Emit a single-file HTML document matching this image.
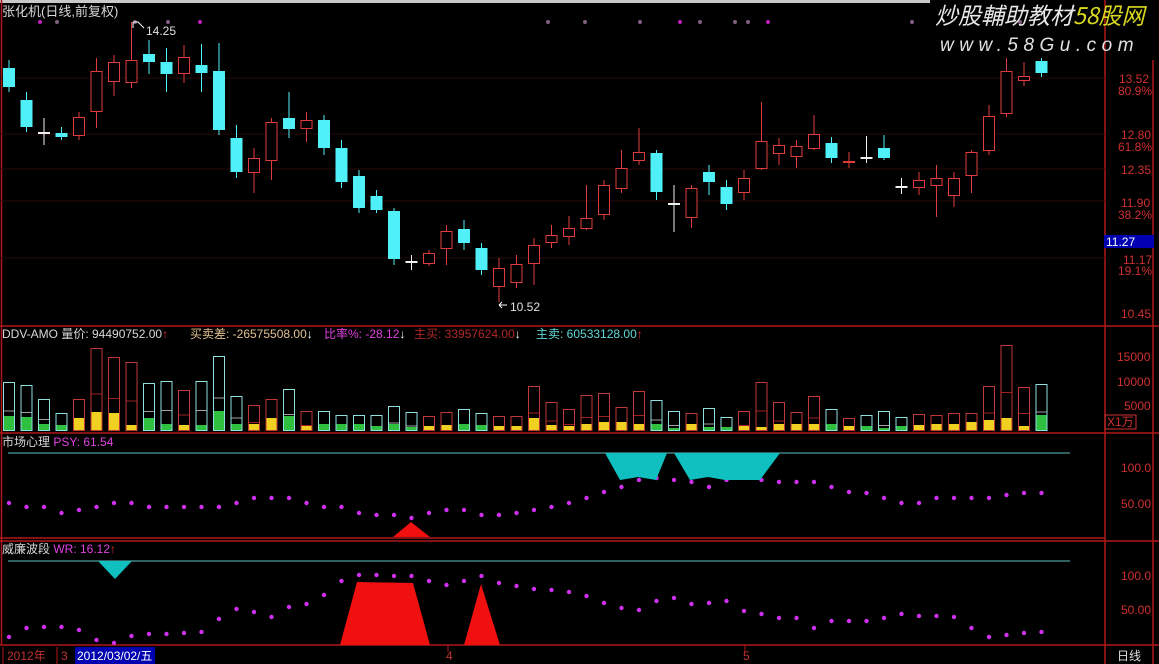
<!DOCTYPE html>
<html><head><meta charset="utf-8">
<style>
html,body{margin:0;padding:0;background:#000;width:1159px;height:664px;overflow:hidden}
svg{display:block}
text{font-family:"Liberation Sans","Noto Sans CJK SC",sans-serif;font-size:12px}
</style></head>
<body>
<svg id="s" width="1159" height="664" viewBox="0 0 1159 664" xmlns="http://www.w3.org/2000/svg">
<rect width="1159" height="664" fill="#000"/>
<rect x="0" y="0" width="930" height="3" fill="#c8c8c8"/>
<g stroke="#b01818" stroke-width="1.5" fill="none">
<line x1="1.5" y1="0" x2="1.5" y2="645"/>
<line x1="1105" y1="0" x2="1105" y2="664"/>
<line x1="1153" y1="60" x2="1153" y2="664"/>
<line x1="0" y1="326" x2="1159" y2="326"/>
<line x1="0" y1="433" x2="1159" y2="433"/>
<line x1="0" y1="538" x2="1105" y2="538"/>
<line x1="0" y1="541" x2="1159" y2="541"/>
<line x1="0" y1="645" x2="1159" y2="645"/>
</g>
<g stroke="#2a0808" stroke-width="1">
<line x1="0" y1="78" x2="1105" y2="78"/><line x1="0" y1="134" x2="1105" y2="134"/>
<line x1="0" y1="169" x2="1105" y2="169"/><line x1="0" y1="201" x2="1105" y2="201"/>
<line x1="0" y1="258" x2="1105" y2="258"/>
</g>
<g id="c"></g>
<text x="2" y="16" fill="#d8d8d8" style="font-size:13px">张化机(日线,前复权)</text>
<text x="146" y="35" fill="#e0e0e0">14.25</text>
<path d="M133 22 L133 28 M133 22 L138 22 L144 28" stroke="#fff" fill="none"/>
<text x="510" y="311" fill="#e0e0e0">10.52</text>
<path d="M499 305 L507 305 M499 305 L502 302 M499 305 L502 308" stroke="#fff" fill="none"/>
<text x="935" y="24" fill="#e8e8e8" style="font-size:23px;font-style:italic;font-family:'Noto Sans CJK SC',sans-serif">炒股輔助教材<tspan fill="#d8d820">58股网</tspan></text>
<text x="940" y="51" fill="#e0e0e0" style="font-size:19px;font-style:italic;letter-spacing:5.5px">www.58Gu.com</text>
<g fill="#d03030">
<text x="1119" y="83">13.52</text><text x="1118" y="95">80.9%</text>
<text x="1121" y="139">12.80</text><text x="1118" y="151">61.8%</text>
<text x="1121" y="174">12.35</text>
<text x="1121" y="207">11.90</text><text x="1118" y="219">38.2%</text>
<text x="1123" y="264">11.17</text><text x="1118" y="275">19.1%</text>
<text x="1121" y="318">10.45</text>
</g>
<rect x="1104" y="235" width="50" height="13" fill="#0000b0"/>
<text x="1106" y="246" fill="#fff">11.27</text>
<text x="2" y="338" fill="#d8d8d8">DDV-AMO  量价: 94490752.00<tspan fill="#e03030">↑</tspan></text>
<text x="190" y="338" fill="#e0c090">买卖差: -26575508.00<tspan fill="#fff">↓</tspan></text>
<text x="324" y="338" fill="#e040e0">比率%: -28.12<tspan fill="#fff">↓</tspan></text>
<text x="414" y="338" fill="#b02828">主买: 33957624.00<tspan fill="#fff">↓</tspan></text>
<text x="536" y="338" fill="#60d8d8">主卖: 60533128.00<tspan fill="#e03030">↑</tspan></text>
<g fill="#d03030">
<text x="1117" y="361">15000</text><text x="1117" y="386">10000</text><text x="1124" y="410">5000</text>
</g>
<rect x="1105" y="415" width="31" height="14" fill="none" stroke="#d03030"/>
<text x="1107" y="426" fill="#d03030">X1万</text>
<text x="2" y="446" fill="#d8d8d8">市场心理  <tspan fill="#e040e0">PSY: 61.54</tspan></text>
<line x1="8" y1="453" x2="1070" y2="453" stroke="#60c0c0"/>
<polygon points="605,453 620,480 638,477 656,480 667,453" fill="#10c0c0"/>
<polygon points="674,453 690,480 708,477 725,480 760,480 780,453" fill="#10c0c0"/>
<polygon points="393,537 411,522 430,537" fill="#f01010"/>
<text x="1121" y="472" fill="#d03030">100.0</text><text x="1121" y="508" fill="#d03030">50.00</text>
<text x="2" y="553" fill="#d8d8d8">威廉波段  <tspan fill="#e040e0">WR: 16.12</tspan><tspan fill="#e03030">↑</tspan></text>
<line x1="8" y1="561" x2="1070" y2="561" stroke="#60c0c0"/>
<polygon points="98,561 132,561 115,579" fill="#10c0c0"/>
<polygon points="340,645 357,582 413,583 430,645" fill="#f01010"/>
<polygon points="464,645 481,584 500,645" fill="#f01010"/>
<text x="1121" y="580" fill="#d03030">100.0</text><text x="1121" y="614" fill="#d03030">50.00</text>
<g stroke="#b01818"><line x1="3" y1="647" x2="3" y2="664"/><line x1="57" y1="647" x2="57" y2="664"/><line x1="448" y1="645" x2="448" y2="652"/><line x1="745" y1="645" x2="745" y2="652"/></g>
<text x="7" y="660" fill="#c03030">2012年</text>
<text x="61" y="660" fill="#c03030">3</text>
<rect x="75" y="647" width="80" height="17" fill="#0000b0"/>
<text x="77" y="660" fill="#fff">2012/03/02/五</text>
<text x="446" y="660" fill="#c03030">4</text>
<text x="743" y="660" fill="#c03030">5</text>
<text x="1117" y="660" fill="#e0e0e0">日线</text>
</svg>
<script>
(function(){
var ns="http://www.w3.org/2000/svg",g=document.getElementById("c");
function el(t,a){var e=document.createElementNS(ns,t);for(var k in a)e.setAttribute(k,a[k]);g.appendChild(e);return e;}
var C=[[68,87,60,92,'c'],[100,127,92,132,'c'],[133,133,118,145,'w'],[133,137,127,140,'c'],[117,135,112,140,'r'],[71,111,58,128,'r'],[62,81,55,96,'r'],[60,82,22,88,'r'],[54,62,40,74,'c'],[62,74,48,92,'c'],[57,73,45,83,'r'],[65,73,44,92,'c'],[71,130,43,135,'c'],[138,172,125,178,'c'],[158,172,148,193,'r'],[122,160,118,180,'r'],[118,129,92,138,'c'],[120,128,112,142,'r'],[120,148,115,155,'c'],[148,182,140,188,'c'],[176,208,170,213,'c'],[196,210,190,213,'c'],[211,259,208,265,'c'],[262,262,255,270,'w'],[253,263,250,266,'r'],[231,248,225,265,'r'],[229,243,220,250,'c'],[248,270,243,275,'c'],[268,286,258,302,'r'],[264,282,255,288,'r'],[245,263,238,285,'r'],[235,242,225,248,'r'],[228,236,216,245,'r'],[218,228,185,230,'r'],[185,214,180,220,'r'],[168,188,150,193,'r'],[152,160,128,165,'r'],[153,192,150,200,'c'],[204,204,185,232,'w'],[188,217,185,228,'r'],[172,182,165,195,'c'],[187,204,180,210,'c'],[178,192,170,200,'r'],[141,168,102,170,'r'],[145,153,138,165,'r'],[146,156,140,168,'r'],[134,148,115,150,'r'],[143,158,137,163,'c'],[161,162,152,168,'r'],[158,158,136,163,'w'],[148,158,135,160,'c'],[187,187,178,194,'w'],[180,187,172,195,'r'],[178,185,165,217,'r'],[178,195,172,207,'r'],[152,175,150,193,'r'],[116,150,105,155,'r'],[71,113,58,117,'r'],[76,80,62,86,'r'],[61,73,58,77,'c']];
var VT=[382,385,399,413,399,348,357,362,383,381,390,381,356,396,405,399,389,411,411,415,415,415,406,412,416,412,409,413,416,416,386,402,409,395,393,407,391,400,411,413,408,417,411,382,402,412,396,409,418,415,411,417,414,415,413,413,386,345,387,384];
var VF=[416,417,424,425,418,412,413,425,418,424,425,425,411,424,424,418,416,426,424,424,424,426,424,427,426,425,424,425,426,426,418,425,426,424,422,422,424,424,428,424,427,427,426,427,424,424,424,424,426,426,428,426,425,424,424,422,420,418,426,415];
var PS=[503,507,507,513,510,507,503,503,507,507,507,507,507,503,498,498,498,503,507,507,513,515,515,518,513,510,510,515,515,513,510,507,503,498,492,487,480,478,480,482,487,480,478,480,482,482,482,487,492,493,498,503,503,498,498,498,498,495,493,493];
var WR=[637,628,627,627,630,640,643,636,634,634,633,632,619,609,612,617,607,604,595,581,575,575,576,576,581,585,581,576,583,586,589,590,592,596,603,608,610,601,598,604,603,601,611,614,618,618,628,621,621,621,618,614,616,616,617,628,637,635,633,632];
var TD=[40,57,135,168,200,548,585,640,680,700,735,748,768,912,1020];
TD.forEach(function(x,i){el('circle',{cx:x,cy:22,r:2,fill:(i%4==0?'#c020c0':'#806080')});});
for(var i=0;i<C.length;i++){
 var x=9+i*17.5,d=C[i],col=d[4]=='c'?'#50f0f8':(d[4]=='w'?'#f0f0f0':'#e03c3c');
 el('line',{x1:x,y1:d[2],x2:x,y2:d[3],stroke:col,'stroke-width':1});
 if(d[4]=='c') el('rect',{x:x-6,y:d[0],width:12,height:Math.max(1,d[1]-d[0]),fill:col});
 else if(d[4]=='w') el('line',{x1:x-6,y1:d[0],x2:x+6,y2:d[0],stroke:col,'stroke-width':2});
 else el('rect',{x:x-5.5,y:d[0]+.5,width:11,height:Math.max(1,d[1]-d[0]),fill:'#000',stroke:col,'stroke-width':1});
 var up=d[4]=='r',oc=up?'#c03838':'#90e0e0';
 el('rect',{x:x-5.5,y:VT[i]+.5,width:11,height:430-VT[i],fill:'none',stroke:oc});
 el('line',{x1:x-5,y1:(VT[i]+430)/2+5,x2:x+5,y2:(VT[i]+430)/2+5,stroke:up?'#a02020':'#a0a0a0'});
 el('rect',{x:x-5,y:VF[i],width:10,height:430-VF[i],fill:up?'#f0d020':'#30c040'});
 el('circle',{cx:x,cy:PS[i],r:2.2,fill:'#d030f0'});
 el('circle',{cx:x,cy:WR[i],r:2.2,fill:'#d030f0'});
}
})();
</script>
</body></html>
